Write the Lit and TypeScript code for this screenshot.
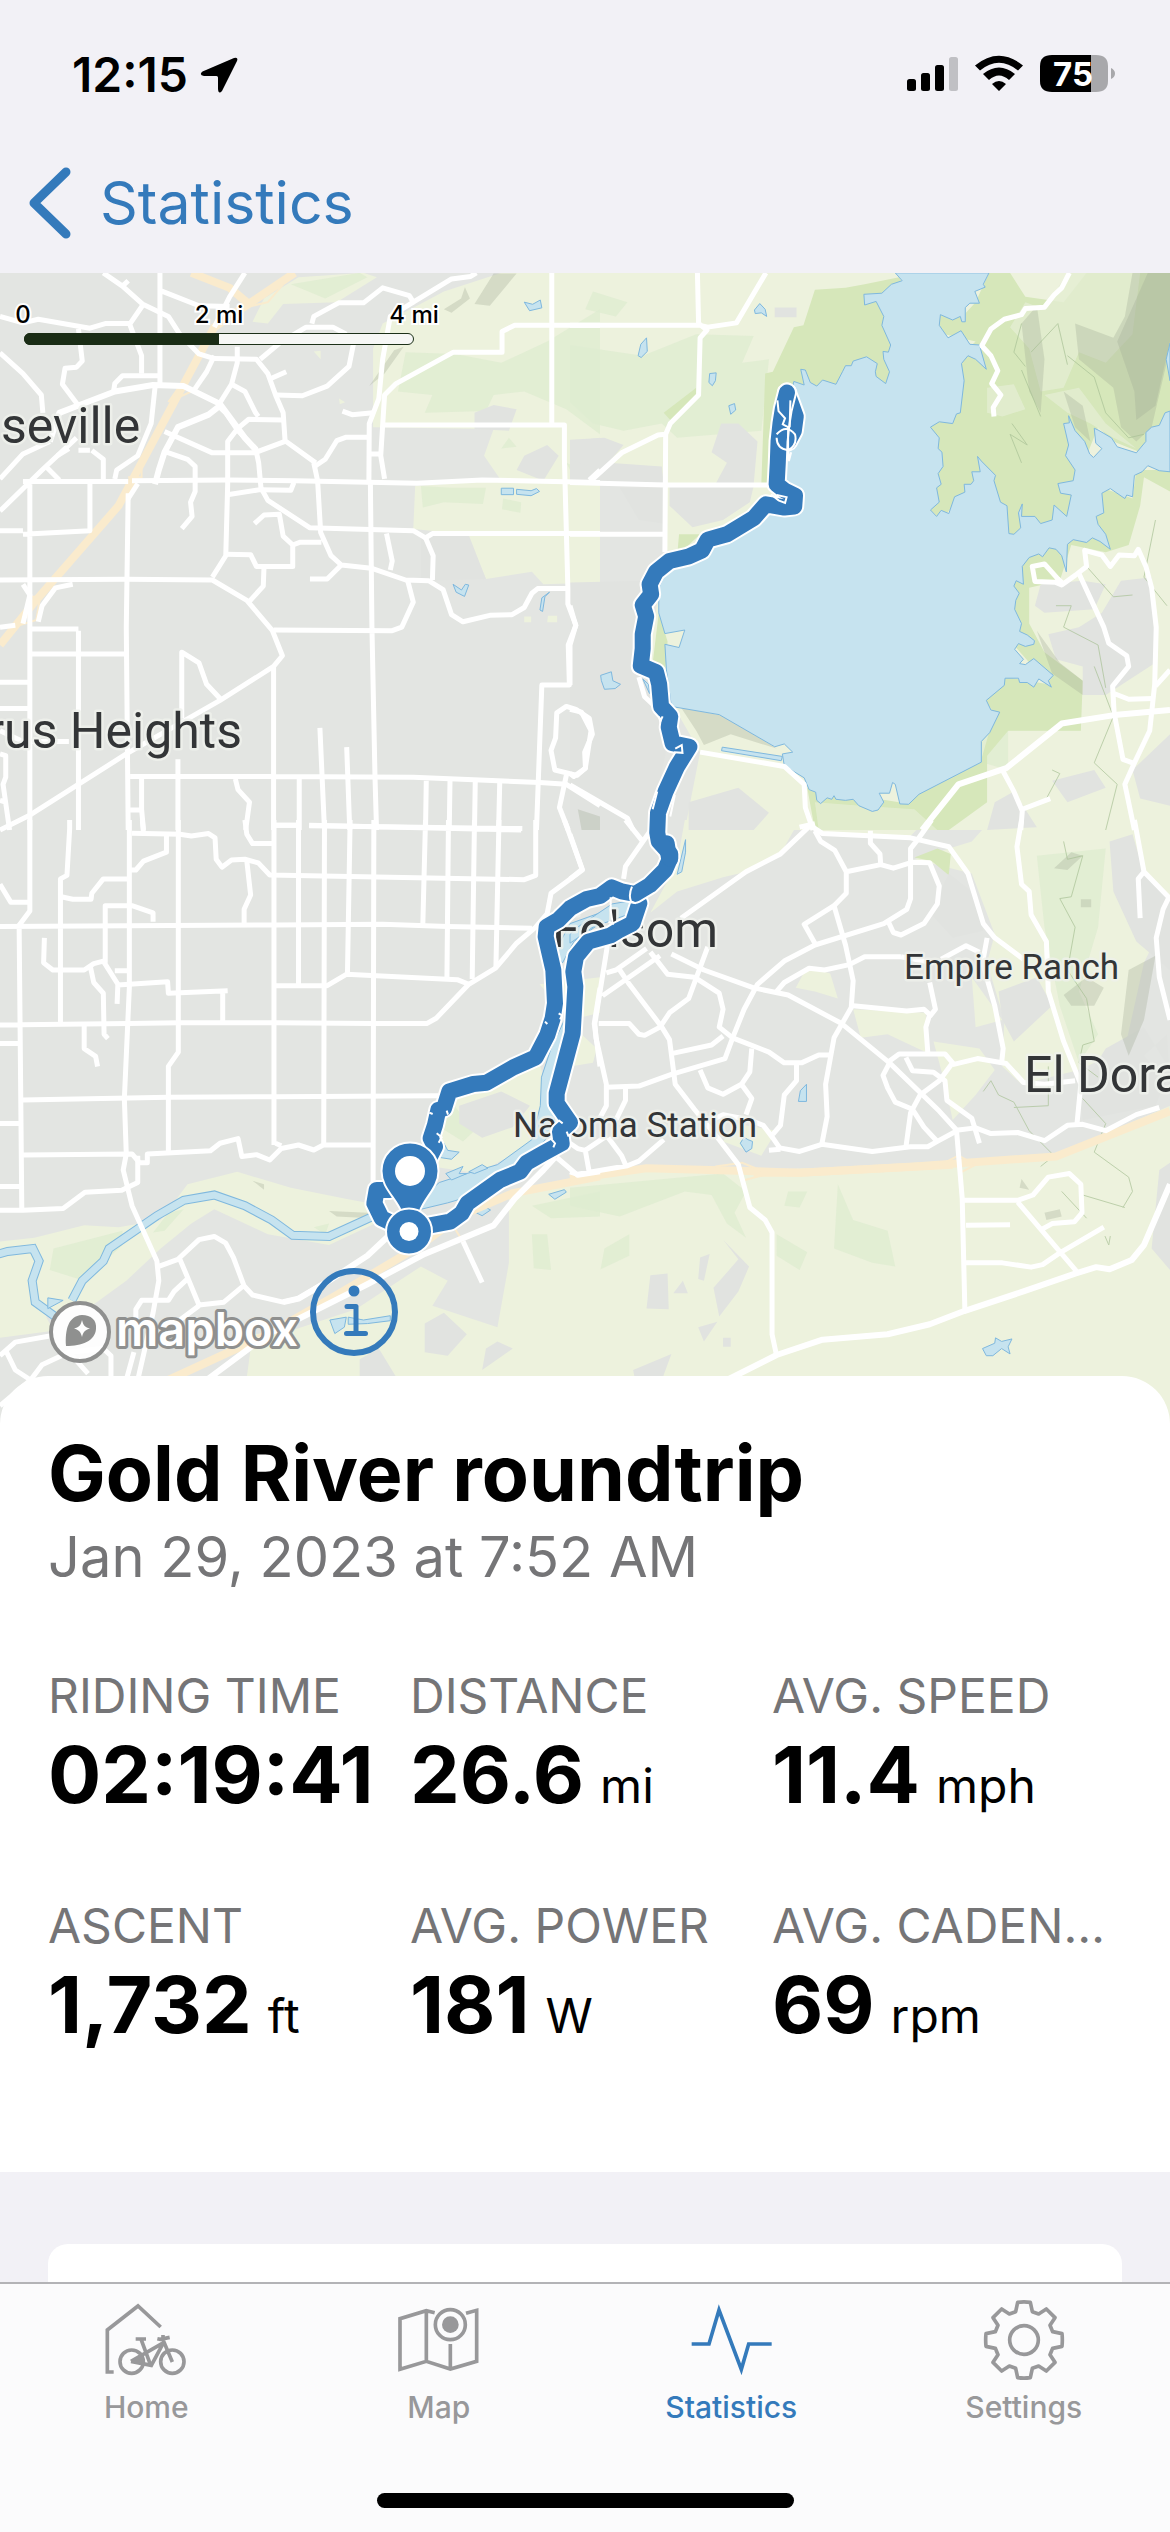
import { LitElement, html, css, svg } from "lit";
import { customElement, property } from "lit/decorators.js";

/* ---------- map data: each tile has its own local grid ---------- */

interface Tile {
  transform: string;
  fields?: string[];
  meadows?: string[];
  parks?: string[];
  glades?: string[];
  urban?: string[];
  shade?: string[];
  water?: string[];
  rivers?: string[];
  contours?: string[];
  roads?: string[];
  wide?: string[];
  highways?: string[];
  ramps?: string[];
}

const northWest: Tile = {
  transform: "translate(0 270) scale(.382653 .357143)",
  fields: [
    "M1090 100L1160 60 1310 8H1568V600L1540 605 1310 590 1265 520 1290 445 975 440V220L1000 150Z",
    "M1085 605L1300 590 1568 600V875L1420 880 1390 845 1270 865 1220 740 1080 725Z",
    "M690 80L780 20 950 8 985 20 880 90 740 95 700 150 660 145Z",
    "M820 228L838 226 838 250ZM886 360L902 370 888 376ZM1370 970H1388V986H1370ZM1432 968H1456V986H1430Z",
  ],
  meadows: [
    "M1060 230L1190 235 1310 260 1430 200 1568 110V460L1480 390 1370 340 1290 350 1270 395 1110 400 1130 350 1040 340Z",
    "M1100 605L1180 610 1270 610 1262 655 1160 650 1105 665ZM1330 470L1350 495 1310 500ZM1480 540L1545 570 1500 580Z",
    "M1315 640L1362 650 1360 680 1312 670Z",
    "M760 40L940 8 960 20 850 80Z",
  ],
  urban: ["M1240 400L1290 378 1350 390 1330 450 1240 445ZM1350 560L1370 520 1430 490 1460 520 1420 590ZM1490 480L1568 470V560L1490 530ZM1225 742L1270 865 1100 870V742Z"],
  shade: ["M1160 110L1205 80 1215 48 1228 80 1180 120ZM1240 95L1290 10 1350 10 1280 100ZM965 325L1030 225 1055 215 1005 290ZM1510 1510L1568 1530V1568H1520Z"],
  water: [
    "M1370 90L1392 96 1412 84 1416 106 1384 114Z", "M1310 611H1342V629H1310ZM1350 614L1388 618 1402 612 1410 620 1388 632 1350 628Z",
    "M1184 880L1206 896 1216 880 1225 882 1214 914 1192 902Z", "M1436 902L1424 915 1418 956 1411 952 1416 918Z",
  ],
  roads: [
    "M0 130L60 148 100 138 235 163 275 150H340L372 100", "M270 8L320 45 335 30M320 45L372 95 440 130 470 180 520 235 560 248 670 250 700 290 722 355 740 400 745 478 825 540",
    "M418 8V320M418 57L520 100 600 102", "M640 8L600 75 560 160", "M340 155L370 240V290M205 165L215 255 200 272 170 275 163 320 205 380",
    "M418 296H320L300 318 296 345M0 232L60 290 108 350 112 400", "M560 240L540 285 508 335", "M620 215V260L605 320 570 380",
    "M680 250L730 205 800 160 870 160 905 180M815 150L820 130 885 92H950L1000 50 1070 72 1080 90 1180 25 1230 18 1245 8",
    "M925 200L912 270 855 325 790 352 722 350M705 305L748 285M605 320L640 340 668 400 675 410",
    "M1080 90L1020 130 1000 250 990 360 965 430 964 600M1568 155H1345L1312 172V230H1185L1035 318 1005 350 995 520 1005 585",
    "M1442 8V432M1005 434H1475V530L1484 890V935L1505 995 1485 1050 1488 1162H1416L1402 1568",
    "M895 395L920 405 975 400M965 515H995M965 468H905L880 478 850 530 825 548",
    "M60 592H335M345 590L595 588 770 590 1090 597 1260 588 1568 595M1540 588L1568 560",
    "M570 380L590 400 622 450 668 500 676 540 682 610 700 645 810 722 1080 730 1112 750 1130 738H1568",
    "M595 600L590 800 555 860M595 600V480L620 445 650 418 740 420M430 452L555 512H665L745 480",
    "M435 510L490 530 510 550V620L498 650 502 690 475 724M590 630L680 615 760 617 768 595M665 710L690 686 730 684 740 745 765 770 765 830H690L670 830 655 797 590 796",
    "M765 770L785 762H840M690 830L688 885 650 930M820 540L830 590 838 735 865 800 892 826 970 835 1060 868 1120 870 1158 895 1180 965 1210 985 1280 967 1338 965 1370 945 1390 905 1405 892H1484",
    "M892 826L855 865H810M968 600L972 1000 980 1420 984 1568M1010 738L1025 815 1020 840M1112 750L1132 800 1130 868M1065 868L1080 930 1050 1000 1025 1010 715 1008",
    "M0 868L330 866 555 868 645 925 712 1010 738 1080 715 1110 575 1205 330 1355 80 1525 0 1568",
    "M0 585L60 515 130 480M0 675L110 560 200 470M60 740L235 730V595M0 730H60M78 600V1568M205 1010V1568M78 1005H205M78 1075H335",
    "M335 625L330 1000 335 1568M120 550L155 588M240 505L270 530V585M205 505H235M150 520L180 500",
    "M475 1255V1070L520 1100 540 1160 575 1200M465 1370V1568M715 1110V1568M340 1418H720L1080 1420 1410 1435 1480 1440 1568 1500M370 1425V1510L375 1568M340 1512H370",
    "M615 1425L622 1455 652 1490 642 1568M782 1425V1568M836 1282L848 1568M906 1336L914 1568M1114 1430L1112 1568M1176 1430L1174 1568M1242 1432L1240 1568M1306 1434L1303 1568M715 1555H785M808 1556L1365 1564",
    "M0 1154H78M0 1228H78M0 1290L60 1320H180M0 1355L15 1360V1420L8 1440 25 1568M0 1485L15 1490M60 880L78 910 60 990M0 1000L40 995M100 985L110 940 145 890 190 880",
    "M1480 1222L1455 1240 1452 1310 1440 1345 1450 1400 1508 1415 1530 1395 1528 1350 1548 1300 1540 1255 1505 1230ZM1480 1415L1462 1505 1485 1568",
    "M405 330L395 430 360 520 305 560 300 585M360 598L335 640",
  ],
  wide: ["M130 480L155 400 215 375 300 340 400 322 480 325 575 375 640 470 670 505M575 380L545 405 465 440 430 510 415 560 405 600"],
  highways: ["M770 8L650 95 560 160 480 320 345 590 310 660 90 930 0 1050", "M500 8L600 50 650 95"],
  ramps: ["M640 105L700 90 740 40M440 370L470 325 500 340 460 360M335 580L370 580 370 545M80 915H105L95 980 50 995"],
};

const northEast: Tile = {
  transform: "translate(570 270) scale(.382653 .357143)",
  fields: ["M0 8H1568V1568H300L340 1350 270 1220 200 1100 250 800 245 600H0Z"],
  meadows: [
    "M0 210L190 240 330 180 480 185 450 260 520 250 500 450 280 470 240 430 140 450 60 430 0 370Z",
    "M60 60L150 90 120 130 40 110ZM700 480L600 500 620 560Z",
    "M1060 1200L1330 1150 1335 1290 1145 1290V1400L1080 1380Z",
  ],
  parks: [
    "M640 55L720 50 770 40 860 20 880 60 830 90 860 200 850 320 700 330 570 340 545 620 500 600 510 290 530 285 585 160 610 155Z",
    "M1095 8L1150 8 1190 75 1290 90 1350 8H1568V480L1490 510 1420 480 1380 440 1320 600 1320 690 1150 745 1080 560 970 700 930 660 960 500 930 430 1000 420 1010 250 1060 200 940 170 960 120 1030 125 1060 90Z",
    "M1375 680L1390 610 1470 640 1480 560 1568 560 1568 620 1500 580 1490 660 1460 770 1400 790 1310 770 1280 870 1200 890 1200 990 1240 1070 1340 1150 1335 1290 1145 1290 1090 1360V1490L990 1568H640L620 1450 860 1490 1075 1370 1110 1240 1080 1200 1140 1140 1250 1160 1160 1050 1155 880 1190 800Z",
    "M245 400L330 330V350L262 420ZM285 740H340L280 800ZM232 960L255 1040 248 1130 215 1110Z",
  ],
  glades: [
    "M1190 90L1240 110 1300 8H1490L1470 180 1400 260 1330 230 1290 330 1230 340 1200 220 1150 160Z",
    "M1090 330L1160 320 1190 390 1130 410 1090 400ZM640 1490L760 1500 900 1510 960 1568H650Z",
    "M1240 350L1330 330 1400 430 1480 500 1420 470 1360 430 1300 400Z",
  ],
  urban: [
    "M535 105H592V132H535ZM395 430L440 430 490 480 480 600 380 600 410 540 370 510ZM0 475L90 470 140 490 100 540 240 550 245 600 0 595ZM260 605L480 605 470 650 400 700 320 720 260 660ZM130 610L245 610V710L180 700Z",
    "M0 875L200 870 180 960 190 1150 230 1250 250 1350 210 1568H0Z",
    "M1230 880L1340 870 1400 880 1370 950 1240 960 1215 940ZM1440 870L1520 860 1530 1100 1400 1190 1340 1190V1110L1270 1090 1250 1020 1330 1000 1390 960Z",
    "M1260 1430L1370 1400 1400 1450 1300 1490ZM310 1490L440 1450 520 1520 480 1568H310ZM1110 1490L1160 1460 1220 1560 1090 1568ZM1470 1400L1568 1300V1500L1490 1480Z",
  ],
  shade: [
    "M1470 8L1568 8V220L1520 440 1480 480 1440 440 1420 330 1330 250 1320 150 1420 190 1450 130Z",
    "M1510 8L1568 8V200L1530 380 1480 420 1475 340 1430 200Z",
    "M290 1225L400 1248 540 1340 420 1300 350 1330 330 1290Z", "M1180 150L1220 100 1240 250 1230 400 1200 340ZM1290 340L1340 380 1360 480 1320 440Z",
    "M1220 1010L1280 1100 1340 1150V1190L1260 1130Z",
  ],
  water: [
    "M850 8L868 30 840 40 815 65 768 68 770 98 800 88 820 130 815 155 838 210 832 230 818 228 820 250 835 285 825 318 800 298 798 285 803 262 775 243 740 255 735 268 720 268 712 285 695 320 660 308 645 325 628 315 615 280 603 278 612 322 585 312 560 420 560 600 600 640 500 680 350 780 250 850 232 890 232 960 248 1018 300 1008 285 1057 248 1048 252 1120 265 1222 390 1245 535 1335 560 1327 582 1350 555 1355 560 1388 612 1422 625 1455 642 1462 645 1485 655 1494 672 1478 684 1482 690 1472 695 1482 720 1485 740 1482 755 1500 790 1516 805 1512 820 1490 808 1465 835 1465 843 1435 850 1440 862 1495 885 1496 912 1468 1075 1378V1320L1097 1295 1123 1238 1100 1232 1088 1205 1135 1163 1137 1143H1172L1175 1155 1195 1155 1212 1168 1225 1145 1258 1168 1250 1150 1263 1135 1212 1088 1190 1105 1175 1102 1185 1090 1162 1062 1172 1046 1190 1054 1212 1048 1214 1038 1195 1022 1175 1012 1180 990 1162 950 1165 925 1174 905 1160 885 1166 870 1185 880 1182 830 1200 805 1225 795 1235 803 1252 778 1270 782 1285 800 1297 845 1300 768 1315 755 1350 763 1365 750 1385 760 1412 782 1400 740 1380 712 1375 690 1395 680 1390 625 1412 612 1450 640 1455 630 1470 635 1475 575 1495 565 1510 548 1540 562 1568 565V395L1555 400 1540 435 1520 440 1505 455 1505 480 1480 512 1430 495 1415 470 1380 448 1370 443 1374 485 1390 500 1368 525 1358 515 1345 480 1320 450 1303 408 1305 428 1290 430 1303 490 1295 520 1320 560 1315 590 1275 598 1282 625 1310 630 1298 690 1265 658 1260 700 1230 710 1215 690 1180 690 1182 655 1172 680 1178 722 1160 740 1147 738 1142 660 1125 650 1108 590 1112 575 1075 535 1065 522 1072 565 1050 565 1055 590 1048 600 1030 600 1032 622 1005 635 990 682 970 673 958 690 942 672 965 650 958 610 970 600 962 570 975 550 972 510 962 500 965 470 942 440 965 425 1000 430 1010 403 1020 400 1030 310 1023 262 1040 240 1060 250 1088 278 1070 210 1045 208 1022 170 988 190 965 155 968 125 1000 140 1020 130 1024 145 1033 145V105L1045 93 1070 93 1058 60 1085 48 1080 40 1095 8Z",
    "M398 1336L555 1362 552 1374 396 1346Z", "M178 240L185 208 200 190 202 228 186 245Z", "M365 290L382 288 380 310 372 324 363 315Z", "M415 380L430 374 433 392 420 404Z", "M482 112L496 94 510 110 514 130 500 120 484 122Z",
    "M80 1135L108 1125 112 1150 132 1160 118 1172 90 1174 82 1150Z", "M190 1145L205 1160 208 1186ZM1568 205L1558 250 1568 310Z",
  ],
  contours: [
    "M1190 270L1160 230 1180 150M1205 230L1275 150 1300 265M1180 280L1230 410M1300 240L1370 300 1400 400 1460 470 1500 460M1155 430L1195 490 1150 460 1180 540M1270 940L1310 940 1290 1000 1380 1050 1400 1170M1350 830L1420 915 1470 910M1560 940L1500 860 1530 700M1370 1110L1420 1250 1370 1380 1430 1440 1400 1568M1240 1490L1280 1410 1260 1400",
  ],
  roads: [
    "M0 155H340L360 160 435 148 512 8M333 8L336 150 358 168 340 190 336 350 262 430 250 460 248 790M248 460L230 462 135 512 55 590M0 595L250 602H540M0 740H248",
    "M0 940L15 995 0 1050V1162", "M340 1350L560 1390 612 1440 615 1505 635 1568M600 1560L640 1550",
    "M1108 410L1106 385 1126 350 1102 318 1118 282 1100 240 1076 212 1100 165 1135 138 1180 125 1190 108 1240 104 1265 70 1285 50 1305 8",
    "M1290 880L1275 865 1240 823 1208 830 1215 872 1268 874 1285 882 1320 855 1350 830 1345 785 1390 798 1412 830 1435 798 1475 800 1485 782 1505 830 1520 890 1532 1000 1528 1160 1515 1290 1475 1380 1450 1440 1475 1568",
    "M1330 850L1395 1000 1408 1045 1455 1080 1460 1110 1418 1165 1422 1240 1445 1370 1470 1380M1420 1185L1460 1202 1525 1200M1568 1120L1530 1165",
    "M0 1230L30 1238 55 1290 40 1395 10 1418 0 1410M0 1442L150 1535 165 1568M1130 1400L1160 1460 1182 1515 1178 1568M1182 1510L1255 1480M180 1140L195 1195 220 1220",
  ],
  wide: ["M920 1568L1015 1440 1140 1395 1285 1270 1430 1245 1568 1232"],
};

const southWest: Tile = {
  transform: "translate(0 820) scale(.382653 .357143)",
  fields: [
    "M0 1180L90 1170 220 1135 310 1140 420 1120 490 1020 620 985 760 1030 900 1060 1000 1080V1120L860 1190 700 1160 560 1090 500 1130 420 1200 330 1290 240 1360 120 1390 140 1430 0 1450Z",
    "M1130 800L1300 720 1410 680 1430 760 1400 900 1250 990 1130 970Z", "M1330 1040L1568 1000V1760H620L660 1440 760 1430 930 1370 1100 1250 1170 1290 1130 1360 1300 1420 1330 1240Z",
    "M1410 460L1568 440V540L1490 560Z",
  ],
  meadows: ["M140 1200L320 1150 320 1190 220 1290 130 1260ZM440 1100L480 1090 430 1150 400 1155ZM1390 1080L1568 1040V1110L1440 1115ZM1390 1160L1430 1160 1440 1260 1395 1255Z", "M1180 790L1240 870 1210 900 1150 860ZM820 1140L860 1130 850 1160Z"],
  urban: ["M1200 800L1310 760 1385 800 1340 860 1260 890 1200 850ZM1110 1410L1160 1380 1220 1440 1170 1500 1110 1490ZM940 1510L990 1480 1040 1568H940ZM1270 1480L1300 1460 1340 1480 1260 1540Z"],
  shade: ["M860 1095L960 1100 970 1115 880 1110ZM660 1010L690 1020 690 1035Z"],
  water: [
    "M1100 1060L1148 1015 1220 990 1300 965 1390 895 1412 800 1415 720 1440 640 1475 560 1480 620 1450 740 1450 860 1400 930 1300 1000 1240 1050 1170 1072 1100 1090Z",
    "M1450 370L1490 290 1568 260 1568 290 1500 340 1470 400Z",
    "M125 1338L165 1345 125 1368ZM862 1400L905 1392 900 1420 875 1438ZM910 1392L950 1400 1020 1388V1402L960 1410 910 1412Z",
    "M1245 1100L1270 1085 1282 1092 1260 1108ZM1434 1048L1475 1035 1480 1042 1450 1062Z",
    "M1160 905L1170 925 1200 930 1180 950 1150 945ZM1165 990L1210 970 1200 990 1220 990 1180 1008ZM1225 985L1260 965 1275 975 1240 990Z",
  ],
  rivers: ["M-20 1220L20 1208 86 1200 102 1235 84 1290 92 1350 150 1395M188 1345L215 1290 270 1235 285 1200 410 1108 480 1065 560 1050 640 1080 710 1120 765 1163 860 1166 970 1112 1000 1100"],
  roads: [
    "M182 0V25L175 155 158 165V565M78 0V255L50 295 57 1095M0 298L720 294 1000 292 1170 298 1390 303M0 574L335 570 470 568 720 568 975 570H1115L1140 555 1225 460 1295 415 1350 345 1400 300 1430 262 1440 205 1522 140 1475 0",
    "M0 180L28 230H78M160 215L190 222H238L240 205 270 165H335M338 0V470L325 780 330 935 322 980 345 1080 410 1235 415 1290 400 1380 360 1568M345 37L470 40 500 45 545 38 562 50 565 110 580 132 605 112 640 110 675 120 705 154 1370 167 1400 155V0",
    "M372 0L375 37M435 40V90L375 115 355 140H340M640 0L645 40 660 66H712M645 115L655 210 638 250V290M466 0V650L440 690V930M716 0V910M780 0V462M848 0L846 905M915 0L908 432M977 0L975 1020M1112 0L1105 292M1172 0L1168 440M1240 0L1234 445M1304 0L1296 412M720 15H780M808 15L1362 28",
    "M275 400V240H345L400 260V285M116 330L114 400 138 420H220L245 402 270 395 308 460 306 515M300 422H335M235 405L245 455 270 485 272 600 282 612M308 462L438 453 440 485 595 478M582 480V565M220 574V640L250 662 255 690",
    "M720 464H855L905 432 1195 447 1225 460M60 784L440 776 720 775 1145 772M60 938L345 935 365 960H385V935L550 926 575 905 622 892 632 942 670 937 705 952 735 920 780 910 820 924 845 910H975M720 905L735 912",
    "M0 626H55M0 850H55M0 1026H55M0 1093H60L165 1088 222 1042 318 1037 360 1015V940",
    "M415 1250L465 1230 520 1175 560 1166 590 1185 610 1225 638 1305 660 1330 740 1350 780 1340 850 1295M470 1230L490 1280 520 1358 585 1350 635 1305M490 1285L455 1320 440 1345 370 1345 355 1370 355 1400M520 1360L470 1400",
    "M0 1500L40 1462 130 1445M15 1485L40 1540 80 1568M0 1640L80 1568 110 1525 180 1490 230 1550M180 1490L270 1480 290 1500V1568M330 1568L350 1490M1210 1180L1260 1295M1455 945L1510 995 1568 985M560 1560L580 1568",
    "M1568 470L1553 570 1568 690",
  ],
  wide: ["M740 1350L780 1340 860 1290 960 1220 1020 1160M500 1600L700 1440 960 1300 1110 1215 1290 1135 1345 1060 1420 980 1450 945"],
  highways: ["M440 1568L700 1440 880 1330 1100 1190 1200 1110 1340 1045 1568 998"],
  ramps: ["M1180 1130L1210 1180M1085 1195L1105 1220M1330 1040L1345 1060"],
};

const southEast: Tile = {
  transform: "translate(570 820) scale(.382653 .357143)",
  fields: [
    "M0 1010L200 975 440 980 1000 965 1270 940 1568 800V1760H0Z",
    "M300 0H600L550 95 480 140 400 160 280 200 210 260 280 120ZM600 0H930L890 45 660 35Z",
    "M900 110L1050 60 1100 0H1568V250L1500 400 1450 640 1330 700 1180 740 1130 690 1135 560 1090 400 1110 320 1050 150Z",
    "M590 470L620 410 680 430 700 500 640 480ZM740 530L930 540 930 650 830 600 760 610ZM950 620L1070 640 1110 700 1060 770 1000 840 980 740ZM430 850L540 870 500 940 400 900ZM1050 440L1130 560 1060 580Z",
    "M0 440L30 460 30 600 70 640 60 680 0 690Z",
  ],
  meadows: [
    "M0 1030L400 990 460 1040 430 1100 460 1170 410 1130 370 1050 300 1040 130 1110 0 1080ZM540 1160L620 1210 600 1260 540 1220ZM700 1020L740 1120 830 1150 850 1250 790 1240 690 1200ZM90 1200L155 1160V1220L80 1258ZM570 1040L620 1040 600 1085 560 1080Z",
    "M1220 100L1400 80 1380 300 1330 480 1380 600 1330 680 1280 520 1240 300Z",
  ],
  parks: ["M720 0H1015L985 28 735 26 720 15ZM900 105L960 80 995 95 990 155 945 115ZM640 0H670V15Z"],
  urban: [
    "M990 150L1050 200 1080 310 1000 330 940 260ZM1560 600L1500 660 1568 740ZM1120 480L1220 440 1260 520 1160 620 1130 560ZM1400 640L1500 580 1568 700 1530 800 1340 840 1330 760Z",
    "M340 1225L365 1215 350 1290 335 1285ZM210 1275L255 1270 258 1370 200 1368ZM375 1310L440 1230 400 1175 468 1250 440 1320 390 1390ZM335 1420L385 1405 350 1460ZM165 1540L265 1495 240 1568H170ZM400 1450H420V1475H400ZM270 1325L295 1290 308 1325ZM1540 980L1568 960V1260L1520 1200Z",
    "M1410 60L1470 40 1500 150 1568 220V420L1480 340 1420 200Z",
  ],
  shade: ["M1265 135L1310 90 1340 100 1300 140ZM1335 222H1362V244H1335ZM1290 490L1350 440 1395 470 1370 520 1310 520ZM1180 1005L1200 1035 1175 1030ZM1240 1100L1280 1090 1285 1110 1245 1120ZM1460 420L1530 380 1500 560 1460 660 1440 600Z"],
  water: [
    "M597 788L602 758 618 740V788ZM445 905L455 888 465 895 477 900 475 920 460 930ZM1078 1480L1110 1465 1112 1450 1128 1460 1155 1453 1145 1475 1150 1495 1128 1480 1105 1500 1088 1500ZM302 55V90L292 145 280 152Z",
    "M20 300L110 235 165 225 150 265 60 300 0 345V320Z",
  ],
  contours: ["M1290 60L1300 110 1340 100 1310 215 1280 220 1320 300 1300 420 1350 500 1370 620 1340 630 1330 680 1380 720M1080 760L1100 730 1120 770 1160 790 1200 870 1265 940 1230 970M1250 690V800L1160 805M1340 780L1400 850 1370 930 1460 1000 1470 1040 1445 1085M1285 1040L1350 1115M1340 1050L1450 1085M1398 1165L1408 1190 1412 1165"],
  roads: [
    "M628 15L660 38 890 50 990 75 1040 150 1080 290 1110 330 1185 390M628 15L550 95 460 145 290 275M945 0L905 60 890 80V220L880 250 820 290 640 350 560 395 490 460 455 530 425 610 405 668 265 712 180 745 95 748",
    "M640 30L655 60 692 85 722 145 812 125 810 95 785 65V30M812 125L845 135 895 118 940 120 965 185 960 235 925 290 865 322 845 315 832 285M722 145V205L690 240 720 350 740 450 735 525 690 610 668 740 672 830 658 908M690 240L612 292 640 345",
    "M540 480L560 455 625 415 665 420 730 405 770 383H865M265 375L350 420 480 470 570 490 710 570 835 680 965 815 1010 868M210 370L255 432 325 440 390 485 400 530 390 580 425 610 520 650 560 680H605L650 658H680",
    "M95 428L120 420 200 360M85 492L235 380M130 420L155 460 240 580 260 615 275 740 325 810 390 895 440 965 470 1085 510 1120 528 1155V1440L540 1500M360 355L310 500 260 540 235 580 195 603 180 600 155 570H75M98 350L65 570 68 610 95 740V800L75 840M145 750V785L120 840M262 655L370 630 400 605",
    "M475 640L470 705 448 740 400 768 360 750 340 700M448 740L475 780 460 825M592 680V730L560 770 550 855 530 880M740 520L880 535 925 530 940 545 930 580 935 650M865 383L950 400M970 390L1035 352 1070 370M1090 330L1078 400 1110 520 1132 640 1128 680",
    "M0 985L20 992 150 968 180 955 245 895M50 985L40 925 20 920 0 905M40 925L95 885M100 890L135 940 145 965M370 840L400 825 470 840 505 855 530 890 548 918 600 928 658 908 790 928 890 915H935L960 900 1015 868 1060 862 1100 878 1170 875 1240 898 1300 855 1340 852 1400 870 1480 825 1540 805",
    "M520 925L550 922M835 680L818 715 830 750 850 790 895 810 925 860 958 898M835 675L860 655H980L1000 680 965 730 915 770 890 820 878 915M878 665L895 702 950 706 980 730 985 785 1050 835 1070 905M1000 685L1065 668 1140 682 1185 735 1240 740 1320 730M940 455L955 530 940 550",
    "M1180 0L1168 75 1180 180 1200 200 1205 265 1245 340 1250 480 1290 620 1335 740 1325 850M1475 0L1500 145 1568 220M1500 145L1485 165 1490 275M1568 210L1550 250 1532 330 1540 440 1568 560",
    "M1030 1065H1170L1210 1050 1250 1000 1305 990 1335 1020 1338 1100 1318 1125 1260 1130 1235 1145M1170 1070L1325 1265M1035 1135L1150 1133M1035 1240H1130L1205 1252 1235 1245 1280 1212 1395 1140M140 165L145 130 210 30M0 40L32 138 0 165M145 0L190 60",
    "M1010 868L1025 1060 1032 1375",
  ],
  wide: ["M410 1568L540 1498 660 1455 830 1440 940 1412 1030 1375 1185 1320 1320 1270 1375 1252 1410 1258 1468 1232 1500 1190 1568 1020"],
  highways: ["M0 1005L200 975 440 982 600 988 900 970 1270 942 1568 815", "M480 988L600 988 1000 965"],
  ramps: ["M380 970L450 960 520 990 450 1010M960 970L1015 940 1060 965 1015 990"],
};

const TILES = [northEast, northWest, southWest, southEast];
const TILE_NE = northEast.transform;
const TILE_ROUTE = "translate(340 860) scale(.333333)";

const layer = (tiles: Tile[], key: Exclude<keyof Tile, "transform">, cls: string) =>
  tiles.map((t) => svg`<g class=${cls} transform=${t.transform}>${(t[key] ?? []).map((d) => svg`<path d=${d}></path>`)}</g>`);

const ROUTE_NORTH =
  "M567 343L556 390 550 430 545 480 543 540 540 600 560 617 588 632 586 662 560 665 512 656 480 695 410 740 360 755 345 785 310 802 260 815 225 845 208 880 212 908 190 938 199 970 190 1020 190 1060 185 1108 225 1126 233 1160 238 1222 262 1250 258 1280 268 1325 312 1335 280 1390 250 1460 230 1520 228 1575 232 1600 262 1635 262 1648";
const ROUTE_SPUR = "M567 343L580 380 590 410 585 450 570 480";
const ROUTE_WEST =
  "M980 -50L988 0 975 30 930 75 885 102 845 94 815 82 780 108 740 117 690 145 655 180 620 200 617 230 640 330 645 430 638 475 622 525 587 592 520 622 440 668 400 672 328 694 312 745 295 750 285 795 272 835 285 860 265 900 230 960";
const ROUTE_EAST =
  "M898 130L878 190 835 212 812 226 745 245 708 290 700 335 706 380 698 520 650 700 650 730 690 788 660 815 665 850 610 880 560 908 540 935 480 960 382 1030 365 1060 330 1085 250 1100";
const ROUTE_LOOP = "M150 990L110 990 103 1030 125 1075 200 1110";

/* ---------- map view ---------- */

@customElement("ride-map")
export class RideMap extends LitElement {
  static styles = css`
    :host { display: block; position: relative; overflow: hidden; background: #e3e5e2; }
    .canvas { display: block; width: 100%; height: auto; }
    path { vector-effect: non-scaling-stroke; }
    .fields path { fill: #edf2dd; }
    .meadows path { fill: #deecd1; opacity: .8; }
    .parks path { fill: #d6e7ba; }
    .glades path { fill: #e4edd2; opacity: .8; }
    .urban path { fill: #e1e3e0; }
    .shade path { fill: #a3ab94; opacity: .32; }
    .water path { fill: #c6e3ef; stroke: #7fb8de; stroke-width: 1; }
    .river-edge path { fill: none; stroke: #7fb8de; stroke-width: 9; }
    .river path { fill: none; stroke: #c6e3ef; stroke-width: 7; }
    .contours path { fill: none; stroke: #a9c296; stroke-width: 1; opacity: .7; }
    .roads path { fill: none; stroke: #fff; stroke-width: 5; stroke-linejoin: round; }
    .wide path { fill: none; stroke: #fff; stroke-width: 6; stroke-linejoin: round; }
    .highways path { fill: none; stroke: #faebcd; stroke-width: 8; stroke-linejoin: round; }
    .ramps path { fill: none; stroke: #faebcd; stroke-width: 2; }
    .casing { fill: none; stroke: #fff; stroke-width: 20; stroke-linecap: round; stroke-linejoin: round; }
    .line { fill: none; stroke: #347abb; stroke-width: 16; stroke-linecap: round; stroke-linejoin: round; }
    .scratch { fill: none; stroke: #fff; stroke-width: 2; }
    .place { font-family: Roboto, "Liberation Sans", sans-serif; fill: #333537; stroke: #eff1ec; stroke-width: 5; stroke-opacity: .8; paint-order: stroke; stroke-linejoin: round; }
    .town { font-size: 50px; }
    .suburb { font-size: 35px; }
    .scale { font-family: Inter, "Liberation Sans", sans-serif; font-size: 24px; font-weight: 500; fill: #000; stroke: #fff; stroke-width: 4; paint-order: stroke; text-anchor: middle; }
    .credits { position: absolute; left: 48px; bottom: 81px; display: flex; align-items: center; }
    .wordmark { width: 262px; height: 88px; flex: none; overflow: visible; }
    .brand { font-family: Inter, "Liberation Sans", sans-serif; font-size: 47px; font-weight: 600; fill: #fff; stroke: #8f908f; stroke-width: 6; paint-order: stroke; stroke-linejoin: round; }
    .info { width: 88px; height: 88px; padding: 0; border: 0; background: none; }
    .info svg { display: block; width: 88px; height: 88px; }
  `;

  render() {
    return html`
      <svg class="canvas" viewBox="0 273 1170 1164" role="img" aria-label="Route map">
        ${layer(TILES, "fields", "fields")} ${layer(TILES, "meadows", "meadows")}
        ${layer(TILES, "parks", "parks")} ${layer(TILES, "glades", "glades")}
        ${layer(TILES, "urban", "urban")} ${layer(TILES, "shade", "shade")}
        ${layer(TILES, "rivers", "river-edge")} ${layer(TILES, "rivers", "river")}
        ${layer(TILES, "water", "water")} ${layer(TILES, "contours", "contours")}
        ${layer(TILES, "highways", "highways")} ${layer(TILES, "ramps", "ramps")}
        ${layer(TILES, "roads", "roads")} ${layer(TILES, "wide", "wide")}
        <g class="place town">
          <text x="1" y="443">seville</text>
          <text x="242" y="748" text-anchor="end">rus Heights</text>
          <text x="718" y="947" text-anchor="end">Folsom</text>
          <text x="1024" y="1092">El Dora</text>
        </g>
        <g class="place suburb">
          <text x="904" y="979">Empire Ranch</text>
          <text x="513" y="1137">Natoma Station</text>
        </g>

        <g transform=${TILE_NE}>
          <path class="casing" d=${ROUTE_SPUR}></path><path class="line" d=${ROUTE_SPUR}></path>
        </g>
        <g transform=${TILE_ROUTE}>
          <path class="casing" d=${ROUTE_EAST}></path><path class="casing" d=${ROUTE_LOOP}></path>
          <path class="line" d=${ROUTE_EAST}></path><path class="line" d=${ROUTE_LOOP}></path>
          <path class="casing" d=${ROUTE_WEST}></path>
        </g>
        <g transform=${TILE_NE}>
          <path class="casing" d=${ROUTE_NORTH}></path>
        </g>
        <g transform=${TILE_ROUTE}><path class="line" d=${ROUTE_WEST}></path></g>
        <g transform=${TILE_NE}>
          <path class="line" d=${ROUTE_NORTH}></path>
          <path class="scratch" d="M542 365L545 395 562 415 556 432 570 440 570 495 572 535 578 510M576 365L574 440M540 460Q565 430 588 460 595 490 570 505 540 500 540 470M525 628L545 645 562 652 566 636 540 630M232 1250L236 1264 242 1250M275 1340L292 1330 294 1352 272 1350M216 1510L228 1460M262 1530L274 1470"></path>
        </g>
        <g transform=${TILE_ROUTE}>
          <path class="scratch" d="M876 80Q865 105 873 124L888 130M812 112V150L818 190 805 185M656 460L666 466 660 478M615 485L622 492M268 758L278 762M320 752L324 764M290 820L305 832 296 848M655 780L668 790M680 815L686 830M632 835L645 850 640 862"></path>
        </g>

        <path fill="#347abb" stroke="#fff" stroke-width="2" d="M410 1142.500c-15.700 0-28.500 12.500-28.500 28.500 0 17 14 26 20 41l6 14h6l6-14c5-15 19-24 19-41 0-16-12.800-28.500-28.500-28.500Z"></path>
        <circle cx="410" cy="1171" r="15" fill="#fff"></circle>
        <circle cx="409" cy="1231.500" r="23" fill="#347abb" stroke="#fff" stroke-width="2"></circle>
        <circle cx="409" cy="1231.500" r="9.500" fill="#fff"></circle>

        <rect x="24.500" y="333.500" width="389" height="11" rx="5.500" fill="#f6f7f5" stroke="#1c3018"></rect>
        <path fill="#1a2c15" d="M219 333v12H30a6 6 0 0 1 0-12Z"></path>
        <g class="scale">
          <text x="23" y="323">0</text><text x="219" y="323">2 mi</text><text x="414" y="323">4 mi</text>
        </g>
      </svg>
      <div class="credits">
        <svg class="wordmark" viewBox="0 0 262 88" role="img" aria-label="mapbox">
          <circle cx="32" cy="64" r="29" fill="#fff" fill-opacity=".92" stroke="#8f908f" stroke-width="4"></circle>
          <path fill="#8f908f" d="M18 78c-1-16 2-30 16-31 9 0 15 5 14 14-1 12-14 17-30 17Z"></path>
          <path fill="#fff" d="M34 52c1.500 6 3 7 8 8.500-5 1.500-6.500 3-8 8.500-1.500-5.500-3-7-8-8.500 5-1.500 6.500-2.500 8-8.500Z"></path>
          <text class="brand" x="68" y="78">mapbox</text>
        </svg>
        <button class="info" aria-label="Map information">
          <svg viewBox="0 0 88 88" fill="none" stroke="#347abb">
            <circle cx="44" cy="44" r="41" stroke-width="6"></circle>
            <circle cx="44" cy="23" r="5.500" fill="#347abb" stroke="none"></circle>
            <path stroke-width="5" stroke-linecap="round" stroke-linejoin="round" d="M37 38.500H46V65.500M36.500 65.500H55.500"></path>
          </svg>
        </button>
      </div>
    `;
  }
}

/* ---------- one figure of the ride ---------- */

@customElement("ride-stat")
export class RideStat extends LitElement {
  @property() label = "";
  @property() value = "";
  @property() unit = "";

  static styles = css`
    :host { display: block; min-width: 0; }
    .label { overflow: hidden; white-space: nowrap; text-overflow: ellipsis; font-size: 48px; line-height: 60px; color: #757577; }
    .figure { display: flex; align-items: baseline; gap: 16px; white-space: nowrap; line-height: 96px; }
    .value { font-size: 79px; font-weight: 700; }
    .unit { font-size: 48px; line-height: 48px; }
  `;

  render() {
    return html`
      <div class="label">${this.label}</div>
      <div class="figure">
        <span class="value">${this.value}</span>${this.unit ? html`<span class="unit">${this.unit}</span>` : null}
      </div>
    `;
  }
}

/* ---------- page ---------- */

const STATS = [
  ["RIDING TIME", "02:19:41", ""],
  ["DISTANCE", "26.6", "mi"],
  ["AVG. SPEED", "11.4", "mph"],
  ["ASCENT", "1,732", "ft"],
  ["AVG. POWER", "181", "W"],
  ["AVG. CADENCE", "69", "rpm"],
];

const TABS = [
  {
    name: "Home",
    box: "139 57 240 240",
    icon: svg`<path d="M162 276H143V150L235 78 303 141"></path><circle cx="216" cy="245" r="35"></circle><circle cx="338" cy="245" r="35"></circle>
      <path d="M228 177H259M245 180L272 253M214 244L275 256 312 187M214 244L308 190M308 175L338 246M293 176L302 178 330 172M310 165V180"></path><path d="M214 244L248 226 256 252Z" fill="currentColor" stroke="none"></path>`,
  },
  {
    name: "Map",
    box: "1016 57 240 240",
    icon: svg`<path d="M1123 98L1098 92 1019 116V268L1098 244 1170 267 1249 244V91L1217 100M1098 92V244M1170 192V267"></path><circle cx="1170" cy="134" r="45"></circle><circle cx="1170" cy="134" r="25" fill="currentColor" stroke="none"></circle>`,
  },
  {
    name: "Statistics",
    box: "154 57 240 240",
    icon: svg`<path d="M156 192H208L238 90 305 268 327 192H396"></path>`,
  },
  {
    name: "Settings",
    box: "1032 57 240 240",
    icon: svg`<circle cx="1152" cy="180" r="43"></circle><path stroke-linejoin="round" d="M1133 67Q1152 64 1171 67L1177 95 1196 102 1219 87 1245 113 1230 136 1238 155 1266 161Q1268 180 1266 199L1238 205 1230 224 1245 247 1219 273 1196 258 1177 265 1171 293Q1152 296 1133 293L1127 265 1108 258 1085 273 1059 247 1074 224 1066 205 1038 199Q1036 180 1038 161L1066 155 1074 136 1059 113 1085 87 1108 102 1127 95Z"></path>`,
  },
];

@customElement("app-root")
export class AppRoot extends LitElement {
  static styles = css`
    :host { display: flex; flex-direction: column; min-height: 100vh; background: #f2f1f6; color: #000; font-family: Inter, "Liberation Sans", sans-serif; }
    .status { display: flex; align-items: center; justify-content: space-between; height: 60px; padding: 45px 54px 15px 72px; }
    .clock { display: flex; align-items: center; gap: 12px; font-size: 48px; font-weight: 600; line-height: 60px; }
    .arrow { width: 38px; height: 36px; }
    .signals { display: block; width: 210px; height: 40px; margin-bottom: 4px; }
    .level { font-size: 33px; font-weight: 700; fill: #fff; text-anchor: middle; }
    .nav { display: flex; align-items: center; height: 141px; padding: 12px 28px 0; }
    .back { display: flex; align-items: center; gap: 28px; height: 90px; color: #347abb; font-size: 59px; text-decoration: none; }
    .chevron { width: 44px; height: 72px; }
    .body { display: flex; flex: 1; flex-direction: column; }
    .sheet { position: relative; margin-top: -61px; padding: 52px 48px 120px; border-radius: 48px 48px 0 0; background: #fff; }
    .title { margin: 0; font-size: 77px; font-weight: 700; line-height: 90px; }
    .date { margin: 0; font-size: 56px; line-height: 78px; color: #757577; }
    .stats { display: grid; grid-template-columns: repeat(3, minmax(0, 1fr)); gap: 74px 12px; margin-top: 70px; }
    .card { flex: 1; margin: 72px 48px 0; border-radius: 20px 20px 0 0; background: #fff; }
    .tabs { display: flex; flex-direction: column; align-items: center; gap: 66px; padding: 15px 0 24px; border-top: 2px solid #b3b3b6; background: #fbfbfc; }
    .row { display: flex; align-self: stretch; }
    .tab { display: flex; flex: 1; flex-direction: column; align-items: center; gap: 8px; color: #98989a; font-size: 30px; font-weight: 500; line-height: 40px; text-decoration: none; }
    .tab svg { width: 80px; height: 80px; overflow: visible; fill: none; stroke: currentColor; stroke-width: 11; }
    .tab.active { color: #347abb; }
    .handle { width: 417px; height: 15px; border-radius: 8px; background: #000; }
  `;

  render() {
    return html`
      <header>
        <div class="status">
          <div class="clock">
            <span>12:15</span>
            <svg class="arrow" viewBox="0 0 38 36"><path d="M34 1Q38.500 -.5 37 4L22 34Q18.500 38 18 32V20.500Q18 19 16.500 19H4Q-1.500 18 2.500 14.500Z"></path></svg>
          </div>
          <svg class="signals" viewBox="0 0 210 40" role="img" aria-label="Signal, Wi-Fi, battery">
            <rect x="1" y="26" width="9" height="12" rx="2.500"></rect><rect x="15" y="20" width="9" height="18" rx="2.500"></rect>
            <rect x="29" y="12" width="9" height="26" rx="2.500"></rect><rect x="43" y="4" width="9" height="34" rx="2.500" fill="#c0c0c4"></rect>
            <path d="M93 38L86 31Q93 25 100 31ZM83 27L77 21Q93 8 109 21L103 27Q93 18 83 27ZM74 17.500L69 12.500Q93 -7 117 12.500L112 17.500Q93 2 74 17.500Z"></path>
            <path d="M146 2H185V39H146Q134 39 134 28V13Q134 2 146 2Z"></path>
            <path fill="#a8a8ab" d="M185 2H190Q202 2 202 13V28Q202 39 190 39H185ZM205 15Q209 17 209 20.500 209 24 205 26Z"></path>
            <text class="level" x="167" y="33">75</text>
          </svg>
        </div>
        <nav class="nav">
          <a class="back" href="#statistics">
            <svg class="chevron" viewBox="0 0 44 72" fill="none" stroke="currentColor" stroke-width="9" stroke-linecap="round" stroke-linejoin="round"><path d="M38 5L6 36 38 67"></path></svg>
            <span>Statistics</span>
          </a>
        </nav>
      </header>
      <main class="body">
        <ride-map></ride-map>
        <section class="sheet">
          <h1 class="title">Gold River roundtrip</h1>
          <p class="date">Jan 29, 2023 at 7:52 AM</p>
          <div class="stats">
            ${STATS.map(([label, value, unit]) => html`<ride-stat .label=${label} .value=${value} .unit=${unit}></ride-stat>`)}
          </div>
        </section>
        <section class="card"></section>
      </main>
      <footer class="tabs">
        <nav class="row">
          ${TABS.map((t) => html`
            <a class=${t.name === "Statistics" ? "tab active" : "tab"} href="#${t.name.toLowerCase()}">
              <svg viewBox=${t.box} aria-hidden="true">${t.icon}</svg>
              <span>${t.name}</span>
            </a>`)}
        </nav>
        <div class="handle"></div>
      </footer>
    `;
  }
}
